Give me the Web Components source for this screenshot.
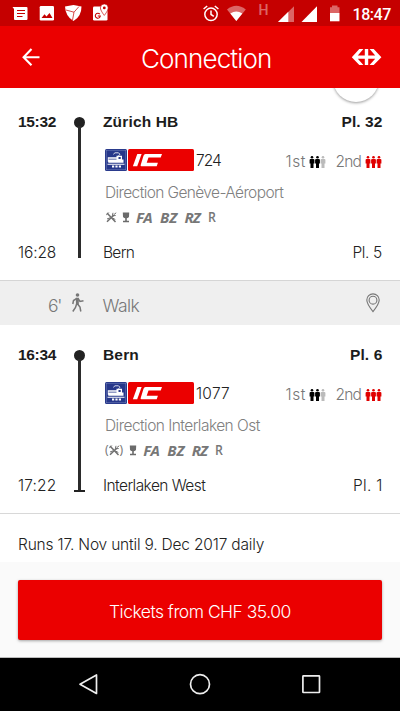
<!DOCTYPE html>
<html lang="en">
<head>
<meta charset="utf-8">
<title>Connection</title>
<style>
html,body{margin:0;padding:0}
body{font-family:Inter,"Liberation Sans",Arial,sans-serif;font-weight:300;color:#222;background:#fff;overflow:hidden}
</style>
</head>
<body>
<phone-screen>
  <status-bar slot="top"></status-bar>
  <app-header slot="top"><fit-text w="131" size="26">Connection</fit-text></app-header>
  <train-leg style="padding-top:22px" from="Zürich HB" from-w="75" dep="15:32" arr="16:28" to="Bern" to-w="31.5" pl1="Pl. 32" pl1-w="40.5" pl2="Pl. 5" pl2-w="29.5" no="724" no-w="25.5" dir="Direction Genève-Aéroport" dir-w="178.5"></train-leg>
  <walk-row></walk-row>
  <train-leg last style="padding-top:18px" from="Bern" from-w="35.5" dep="16:34" arr="17:22" to="Interlaken West" to-w="102.5" pl1="Pl. 6" pl1-w="32" pl2="Pl. 1" pl2-w="29" no="1077" no-w="33.5" dir="Direction Interlaken Ost" dir-w="155"></train-leg>
  <runs-note><fit-text w="246" size="15.5">Runs 17. Nov until 9. Dec 2017 daily</fit-text></runs-note>
  <ticket-bar slot="bottom"><fit-text w="182" size="17.5">Tickets from CHF 35.00</fit-text></ticket-bar>
  <nav-bar slot="bottom"></nav-bar>
</phone-screen>
<script>
function define(name, html, after) {
  customElements.define(name, class extends HTMLElement {
    connectedCallback() {
      if (this.shadowRoot) return;
      const root = this.attachShadow({mode: 'open'});
      root.innerHTML = typeof html === 'function' ? html(this) : html;
      if (after) after(this, root);
    }
  });
}

/* A single line of text, tracked so that it fills the width given in "w". */
define('fit-text', e => `<style>
:host{display:block;white-space:nowrap;width:${e.getAttribute('w')}px;font-size:${e.getAttribute('size') || 15}px;line-height:inherit}
span{display:inline-block}
</style><span><slot></slot></span>`, (e, root) => {
  const s = root.querySelector('span');
  const n = e.textContent.length;
  s.style.letterSpacing = ((+e.getAttribute('w') + .3 - s.getBoundingClientRect().width) / (n - 1)).toFixed(3) + 'px';
});

const person = (x, c) => `<g fill="${c}" transform="translate(${x} 0)"><circle cx="2.400" cy="1.300" r="1.300"/><path d="M1 2.900h2.800q1 0 1 1V7.500h-.9V12H.9V7.500H0V3.900q0-1 1-1z"/></g>`;
const icons = {
  status: [400, 26, `<g fill="#fff">
    <path d="M12.500 7H26.500q1 0 1 1V19q0 1-1 1H15q-1 0-1-1V9z"/>
    <path d="M17 10.500h8M17 13.500h8M17 16.500h5.500" stroke="#c50000" stroke-width="1.200"/>
    <rect x="39.700" y="6" width="14.300" height="14.500" rx="1.300"/>
    <path d="M41.500 18l3-3.700 2 2.300 3-3.600 3 5z" fill="#c50000"/>
    <path d="M65 6.500L73.500 5l8 1.500q0 10-8 14.500-8-4.500-8.500-14.500z"/>
    <path d="M66 10l8 2.200 5-5.700M74 12.200l-1.500 8" fill="none" stroke="#c50000" stroke-width=".7"/>
    <rect x="93" y="6.500" width="14.500" height="14" rx="1.300"/>
    <path d="M99.800 14.200a2.500 2.500 0 1 0 .5 1.800h-2.500" fill="none" stroke="#c50000" stroke-width="1.100"/>
    <path d="M104.300 3.900a3.900 3.900 0 0 1 3.900 3.900c0 2.800-3.900 7.600-3.900 7.600s-3.900-4.800-3.900-7.600a3.900 3.900 0 0 1 3.900-3.900z" stroke="#c50000" stroke-width=".7"/>
    <circle cx="104.300" cy="7.900" r="1.400" fill="#c50000"/>
    <g fill="none" stroke="#fff" stroke-width="1.500"><circle cx="211" cy="14.300" r="6.200"/><path d="M211 10.500v4l2.800 1.800M203.600 9l3.600-3M218.400 9l-3.600-3"/></g>
    <path d="M227 9.500q9.300-7.500 18.800 0L236.300 21z" opacity=".4"/><path d="M230.300 13.500q6-4.200 12 0L236.300 21z"/>
    <path d="M294 6.200V22H278z" opacity=".4"/><path d="M288.300 11.800V22H278z"/>
    <path d="M317 6.200V22H301.500z"/>
    <path d="M332 5.500h5.500v1.700h2V13h-9.500V7.200h2z" opacity=".4"/><path d="M330 13h9.500v8.300h-9.500z"/></g>`],
  back: [18, 18, `<path d="M17.500 9.200H1.500M9.500 1L1.600 9.200l7.900 8" fill="none" stroke="#fff" stroke-width="2.100"/>`],
  sbb: [32, 18, `<path fill="#fff" d="M.8 9.200L8.300 1h4.100L6.800 7.500h7V1h3.400v6.500h7L18.600 1h4.100l7.700 8.200-7.700 7.800h-4.100l5.600-6.200h-7V17h-3.400v-6.200h-7l5.600 6.200H8.300z"/>`],
  train: [22, 22, `<rect width="22" height="22" rx="1.500" fill="#26378a"/><rect x="1.200" y="1.200" width="19.600" height="19.600" fill="none" stroke="#7b88bd" stroke-width=".5"/>
    <path fill="#fff" d="M2.800 8.200h8.700V6.800H17V10.500h1.500v3.300H3.300v-1H2.800zM2.500 14.800h17v1H2.500z"/><path d="M8.300 5.300L10 3.800h3.500l1.500 1.500-1.800 1.700" fill="none" stroke="#fff" stroke-width=".8"/><path fill="#26378a" d="M3.500 9.800h8v.6h-8zM13.500 8h2.200v2h-2.200z"/>
    <path d="M7 17.600h2.200M10.400 17.600h2.200M13.800 17.600H16" stroke="#fff" stroke-width="2"/>`],
  ic: [66, 22, `<rect width="66" height="22" rx="1.500" fill="#eb0000"/><g transform="translate(0 .2)" fill="#fff"><path d="M9.300 4.800h4.300L9.200 17H4.900z"/><path d="M17.500 4.800H34l-1.300 3.400H20.500L18.700 13.600h11.200L28.700 17H13.500q-1.200 0-.8-1.300L15.500 6.600q.6-1.800 2-1.800z"/></g>`],
  occ1: [17, 12, person(.6, '#000') + person(6.100, '#000') + person(11.600, '#bbb')],
  occ2: [17, 12, person(.6, '#e00000') + person(6.100, '#e00000') + person(11.600, '#e00000')],
  dish: [11, 11, `<path d="M1 1l8.500 9M1 9.800L8 3" stroke="#707070" stroke-width="1.500" fill="none"/><path d="M0 3.300L2.800.5M7 .8l-.7 3 3.400-.3M8 2.500L10.200.8M1 7l3-1.200M6.500 6l2.800 1.500" stroke="#707070" stroke-width="1" fill="none"/>`],
  glass: [8, 11, `<path fill="#6b6b6b" d="M.8.500h6.400l-.2 4.200q-.4 1.300-2.200 1.500v2.600h2.200v1.500H1V8.800h2.200V6.200Q1.400 6 1 4.700z"/>`],
  walk: [14, 20, `<circle cx="6.500" cy="2" r="1.800" fill="#777"/><path d="M6.300 5.200L6 11.300M5.800 5.400L2.500 7.500 1.800 11M7 5.500L9 8.500l3.500-.8M5.600 11L4.500 14.500 1.800 18.500M6.500 11l2.500 3 .8 4.500" fill="none" stroke="#777" stroke-width="1.500"/><path d="M4.800 4.800h3V12H5z" fill="#777"/>`],
  pin: [14, 20, `<g fill="none" stroke="#777" stroke-width="1.100"><path d="M7 .9a6.200 6.200 0 0 1 6.200 6.200C13.200 11 7 18.600 7 18.600S.8 11 .8 7.100A6.200 6.200 0 0 1 7 .9z"/><circle cx="7" cy="7.200" r="3.900"/></g>`],
  tri: [22, 24, `<path d="M18.500 3v18.500L2 12.200z" fill="none" stroke="#eee" stroke-width="1.700" stroke-linejoin="round"/>`],
  circ: [22, 24, `<circle cx="11" cy="12.200" r="9.500" fill="none" stroke="#eee" stroke-width="1.700"/>`],
  sq: [22, 24, `<rect x="2.900" y="3.900" width="16.600" height="16.600" rx=".5" fill="none" stroke="#eee" stroke-width="1.700"/>`]
};
define('app-icon', e => {
  const [w, h, body] = icons[e.getAttribute('name')];
  return `<style>:host{display:block;flex:none;width:${w}px;height:${h}px}svg{display:block}</style><svg width="${w}" height="${h}" viewBox="0 0 ${w} ${h}">${body}</svg>`;
});

define('phone-screen', `<style>
:host{display:flex;flex-direction:column;width:400px;height:711px;overflow:hidden}
main{flex:1;min-height:0;position:relative;overflow:hidden}
.fab{position:absolute;left:333px;top:-32px;width:46px;height:46px;border-radius:50%;background:#fff;box-shadow:0 1px 3px rgba(0,0,0,.4)}
</style><slot name="top"></slot><main><div class="fab"></div><slot></slot></main><slot name="bottom"></slot>`);

define('status-bar', `<style>
:host{display:grid;height:26px;background:#c50000;color:#fff;font-family:Roboto,sans-serif}
app-icon,div{grid-area:1/1}
div{display:flex;justify-content:flex-end;padding-right:9px;font-weight:500}
.h{font-size:14px;line-height:20px;opacity:.4;margin-right:84px}
.t{font-size:16px;line-height:29px}
</style><app-icon name="status"></app-icon><div><span class="h">H</span><fit-text class="t" w="38.500" size="16.500">18:47</fit-text></div>`);

define('app-header', `<style>
:host{display:flex;align-items:center;justify-content:space-between;height:62px;background:#eb0000;color:#fff;padding:0 17px 0 22px;line-height:62px;box-sizing:border-box}
.c{padding:3px 0 0 22px}
</style><app-icon name="back"></app-icon><div class="c"><slot></slot></div><app-icon name="sbb"></app-icon>`);

define('train-leg', e => {
  const a = n => e.getAttribute(n);
  const last = e.hasAttribute('last');
  return `<style>
:host{display:grid;grid-template-columns:38px 11px 1fr;column-gap:18px;padding:0 18px 16px;font-size:15px;line-height:24px}
.times{display:flex;flex-direction:column;justify-content:space-between}
.rail{display:flex;flex-direction:column;align-items:center;padding:6.500px 0 ${last ? 5 : 6}px}
.dot{width:11px;height:11px;border-radius:50%;background:#222}
.line{flex:1;width:2.500px;background:#2b2b2b;margin-top:-2px}
.foot{width:11px;height:2px;background:#222}
.row{display:flex;justify-content:space-between}
.low{padding-top:1px;margin-bottom:-1px}
b{font-family:"Liberation Sans",Arial,sans-serif;font-weight:700;color:#1c1c1c}
.train{display:flex;align-items:center;height:22px;margin:15px 0 0 2px}
.train>*{margin-right:1px}
.no{margin:2px 0 0 1px}
.occ{display:flex;align-items:center;margin:3px 0 0 auto;color:#777}
.train .occ{margin-right:0}
.occ app-icon{margin-left:3.500px}
.second{margin-left:10px}
.dir{color:#808080;margin:10px 0 0 2px;height:22px}
.attrs{display:flex;align-items:center;height:16px;margin:6px 0 15px ${last ? 2 : 3}px;color:#777;font:italic 700 15px/16px "Noto Sans",sans-serif}
.glass{margin:0 6px 0 ${last ? 6 : 5}px}
.attrs fit-text{margin-right:7.500px}
.attrs .r{font:600 14px/16px "Open Sans",sans-serif;transform:scaleX(.88);transform-origin:0 50%}
.p{font:400 12px/14px "Noto Sans",sans-serif}
</style>
<div class="times"><b><fit-text w="38" size="15.500">${a('dep')}</fit-text></b><fit-text class="low" w="38" size="15.500">${a('arr')}</fit-text></div>
<div class="rail"><i class="dot"></i><i class="line"></i>${last ? '<i class="foot"></i>' : ''}</div>
<div>
 <div class="row"><b><fit-text w="${a('from-w')}" size="15.500">${a('from')}</fit-text></b><b><fit-text w="${a('pl1-w')}" size="15.500">${a('pl1')}</fit-text></b></div>
 <div class="train"><app-icon name="train"></app-icon><app-icon name="ic"></app-icon><fit-text class="no" w="${a('no-w')}" size="15.500">${a('no')}</fit-text>
  <div class="occ"><fit-text w="19.500" size="15.500">1st</fit-text><app-icon name="occ1"></app-icon><fit-text class="second" w="26" size="15.500">2nd</fit-text><app-icon name="occ2"></app-icon></div></div>
 <div class="dir"><fit-text w="${a('dir-w')}" size="15.500">${a('dir')}</fit-text></div>
 <div class="attrs">${last ? '<span class="p">(</span>' : ''}<app-icon name="dish"></app-icon>${last ? '<span class="p">)</span>' : ''}<app-icon class="glass" name="glass"></app-icon><fit-text w="16.500" size="15">FA</fit-text><fit-text w="17" size="15">BZ</fit-text><fit-text w="16" size="15">RZ</fit-text><span class="r">R</span></div>
 <div class="row low"><fit-text w="${a('to-w')}" size="15.500">${a('to')}</fit-text><fit-text w="${a('pl2-w')}" size="15.500">${a('pl2')}</fit-text></div>
</div>`;
});

define('walk-row', `<style>
:host{display:flex;align-items:center;height:45px;box-sizing:border-box;background:#efefef;border-top:1px solid #d5d5d5;color:#777;padding:0 20px 0 48px;line-height:45px}
.m{margin:0 17.500px 0 9px}
.w{padding-top:4px}
.pin{margin:-1px 0 0 auto}
</style><fit-text class="w" w="14" size="17.500">6'</fit-text><app-icon class="m" name="walk"></app-icon><fit-text class="w" w="37" size="17.500">Walk</fit-text><app-icon class="pin" name="pin"></app-icon>`);

define('runs-note', `<style>:host{display:block;border-top:1px solid #d8d8d8;padding:19px 18px 0;line-height:24px;height:60px}</style><slot></slot>`);

define('ticket-bar', `<style>
:host{display:block;box-sizing:border-box;height:96px;background:#fafafa;padding:18px;border-bottom:1px solid #bbb}
div{display:flex;justify-content:center;height:60px;line-height:63px;background:#eb0000;border-radius:2px;color:#fff;box-shadow:0 1px 3px rgba(0,0,0,.35)}
</style><div><slot></slot></div>`);

define('nav-bar', `<style>
:host{display:flex;justify-content:space-between;box-sizing:border-box;height:53px;background:#000;padding:14px 78px 0 78px}
</style><app-icon name="tri"></app-icon><app-icon name="circ"></app-icon><app-icon name="sq"></app-icon>`);
</script>
</body>
</html>
